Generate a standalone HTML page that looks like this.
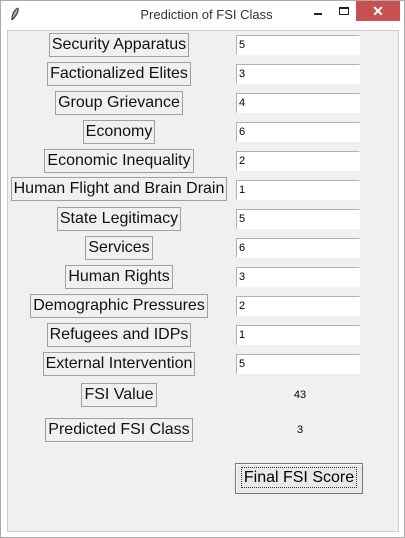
<!DOCTYPE html>
<html><head><style>
*{margin:0;padding:0;box-sizing:border-box}
body{width:405px;height:538px;background:#fff;position:relative;overflow:hidden;font-family:"Liberation Sans",Arial,sans-serif}
.win{position:absolute;left:0;top:0;width:405px;height:538px;border:1px solid #aaa;background:#fff}
.title{position:absolute;left:0;top:6px;width:405px;text-align:center;font-size:13px;color:#333;padding-left:6px}
.close{position:absolute;left:355px;top:0;width:44px;height:20px;background:#c75050;color:#fff;font-size:14px;text-align:center;line-height:20px;font-weight:bold}
.min{position:absolute;left:313px;top:12px;width:8px;height:2px;background:#222}
.max{position:absolute;left:338px;top:6px;width:10px;height:8px;border:1px solid #222;border-top-width:2px}
.client{position:absolute;left:7px;top:30px;width:392px;height:502px;background:#f0f0f0;border:1px solid #ccc}
.lab{position:absolute;left:8px;width:222px;text-align:center}
.lab span{display:inline-block;border:1px solid #a0a0a0;padding:0 2px;font-size:16px;line-height:22px;height:24px;color:#111;background:#f0f0f0}
.ent{position:absolute;left:236px;width:124px;height:20px;background:#fff;border:1px solid #b0b0b0;border-right-color:#fff;border-bottom-color:#fff;font-size:11px;padding-left:2px;line-height:18px}
.val{position:absolute;left:280px;width:40px;text-align:center;font-size:11px}
.btn{position:absolute;left:235px;top:463px;width:128px;height:31px;border:1px solid #777;background:#e8e8e8;box-shadow:inset 1px 1px #fff;font-size:16px;text-align:center;line-height:27px}
.btn span{outline:1px dotted #333;padding:1px 2px}
</style></head><body>
<div class="win">
<svg style="position:absolute;left:9px;top:6px" width="10" height="14" viewBox="0 0 10 14"><path d="M8 1 C4 3 2 7 2 13 M8 1 C9 5 6 9 2 13" stroke="#345" fill="#9ab" stroke-width="1.2"/></svg>
<div class="title">Prediction of FSI Class</div>
<div class="min"></div><div class="max"></div>
<div class="close">✕</div>
</div>
<div class="client"></div>
<div class="lab" style="top:33px"><span>Security Apparatus</span></div>
<div class="lab" style="top:62px"><span>Factionalized Elites</span></div>
<div class="lab" style="top:91px"><span>Group Grievance</span></div>
<div class="lab" style="top:120px"><span>Economy</span></div>
<div class="lab" style="top:149px"><span>Economic Inequality</span></div>
<div class="lab" style="top:177px"><span>Human Flight and Brain Drain</span></div>
<div class="lab" style="top:207px"><span>State Legitimacy</span></div>
<div class="lab" style="top:236px"><span>Services</span></div>
<div class="lab" style="top:265px"><span>Human Rights</span></div>
<div class="lab" style="top:294px"><span>Demographic Pressures</span></div>
<div class="lab" style="top:323px"><span>Refugees and IDPs</span></div>
<div class="lab" style="top:352px"><span>External Intervention</span></div>
<div class="lab" style="top:383px"><span>FSI Value</span></div>
<div class="lab" style="top:418px"><span>Predicted FSI Class</span></div>
<div class="ent" style="top:35px">5</div>
<div class="ent" style="top:64px">3</div>
<div class="ent" style="top:93px">4</div>
<div class="ent" style="top:122px">6</div>
<div class="ent" style="top:151px">2</div>
<div class="ent" style="top:180px">1</div>
<div class="ent" style="top:209px">5</div>
<div class="ent" style="top:238px">6</div>
<div class="ent" style="top:267px">3</div>
<div class="ent" style="top:296px">2</div>
<div class="ent" style="top:325px">1</div>
<div class="ent" style="top:354px">5</div>
<div class="val" style="top:389px">43</div>
<div class="val" style="top:424px">3</div>
<div class="btn"><span>Final FSI Score</span></div>
</body></html>
